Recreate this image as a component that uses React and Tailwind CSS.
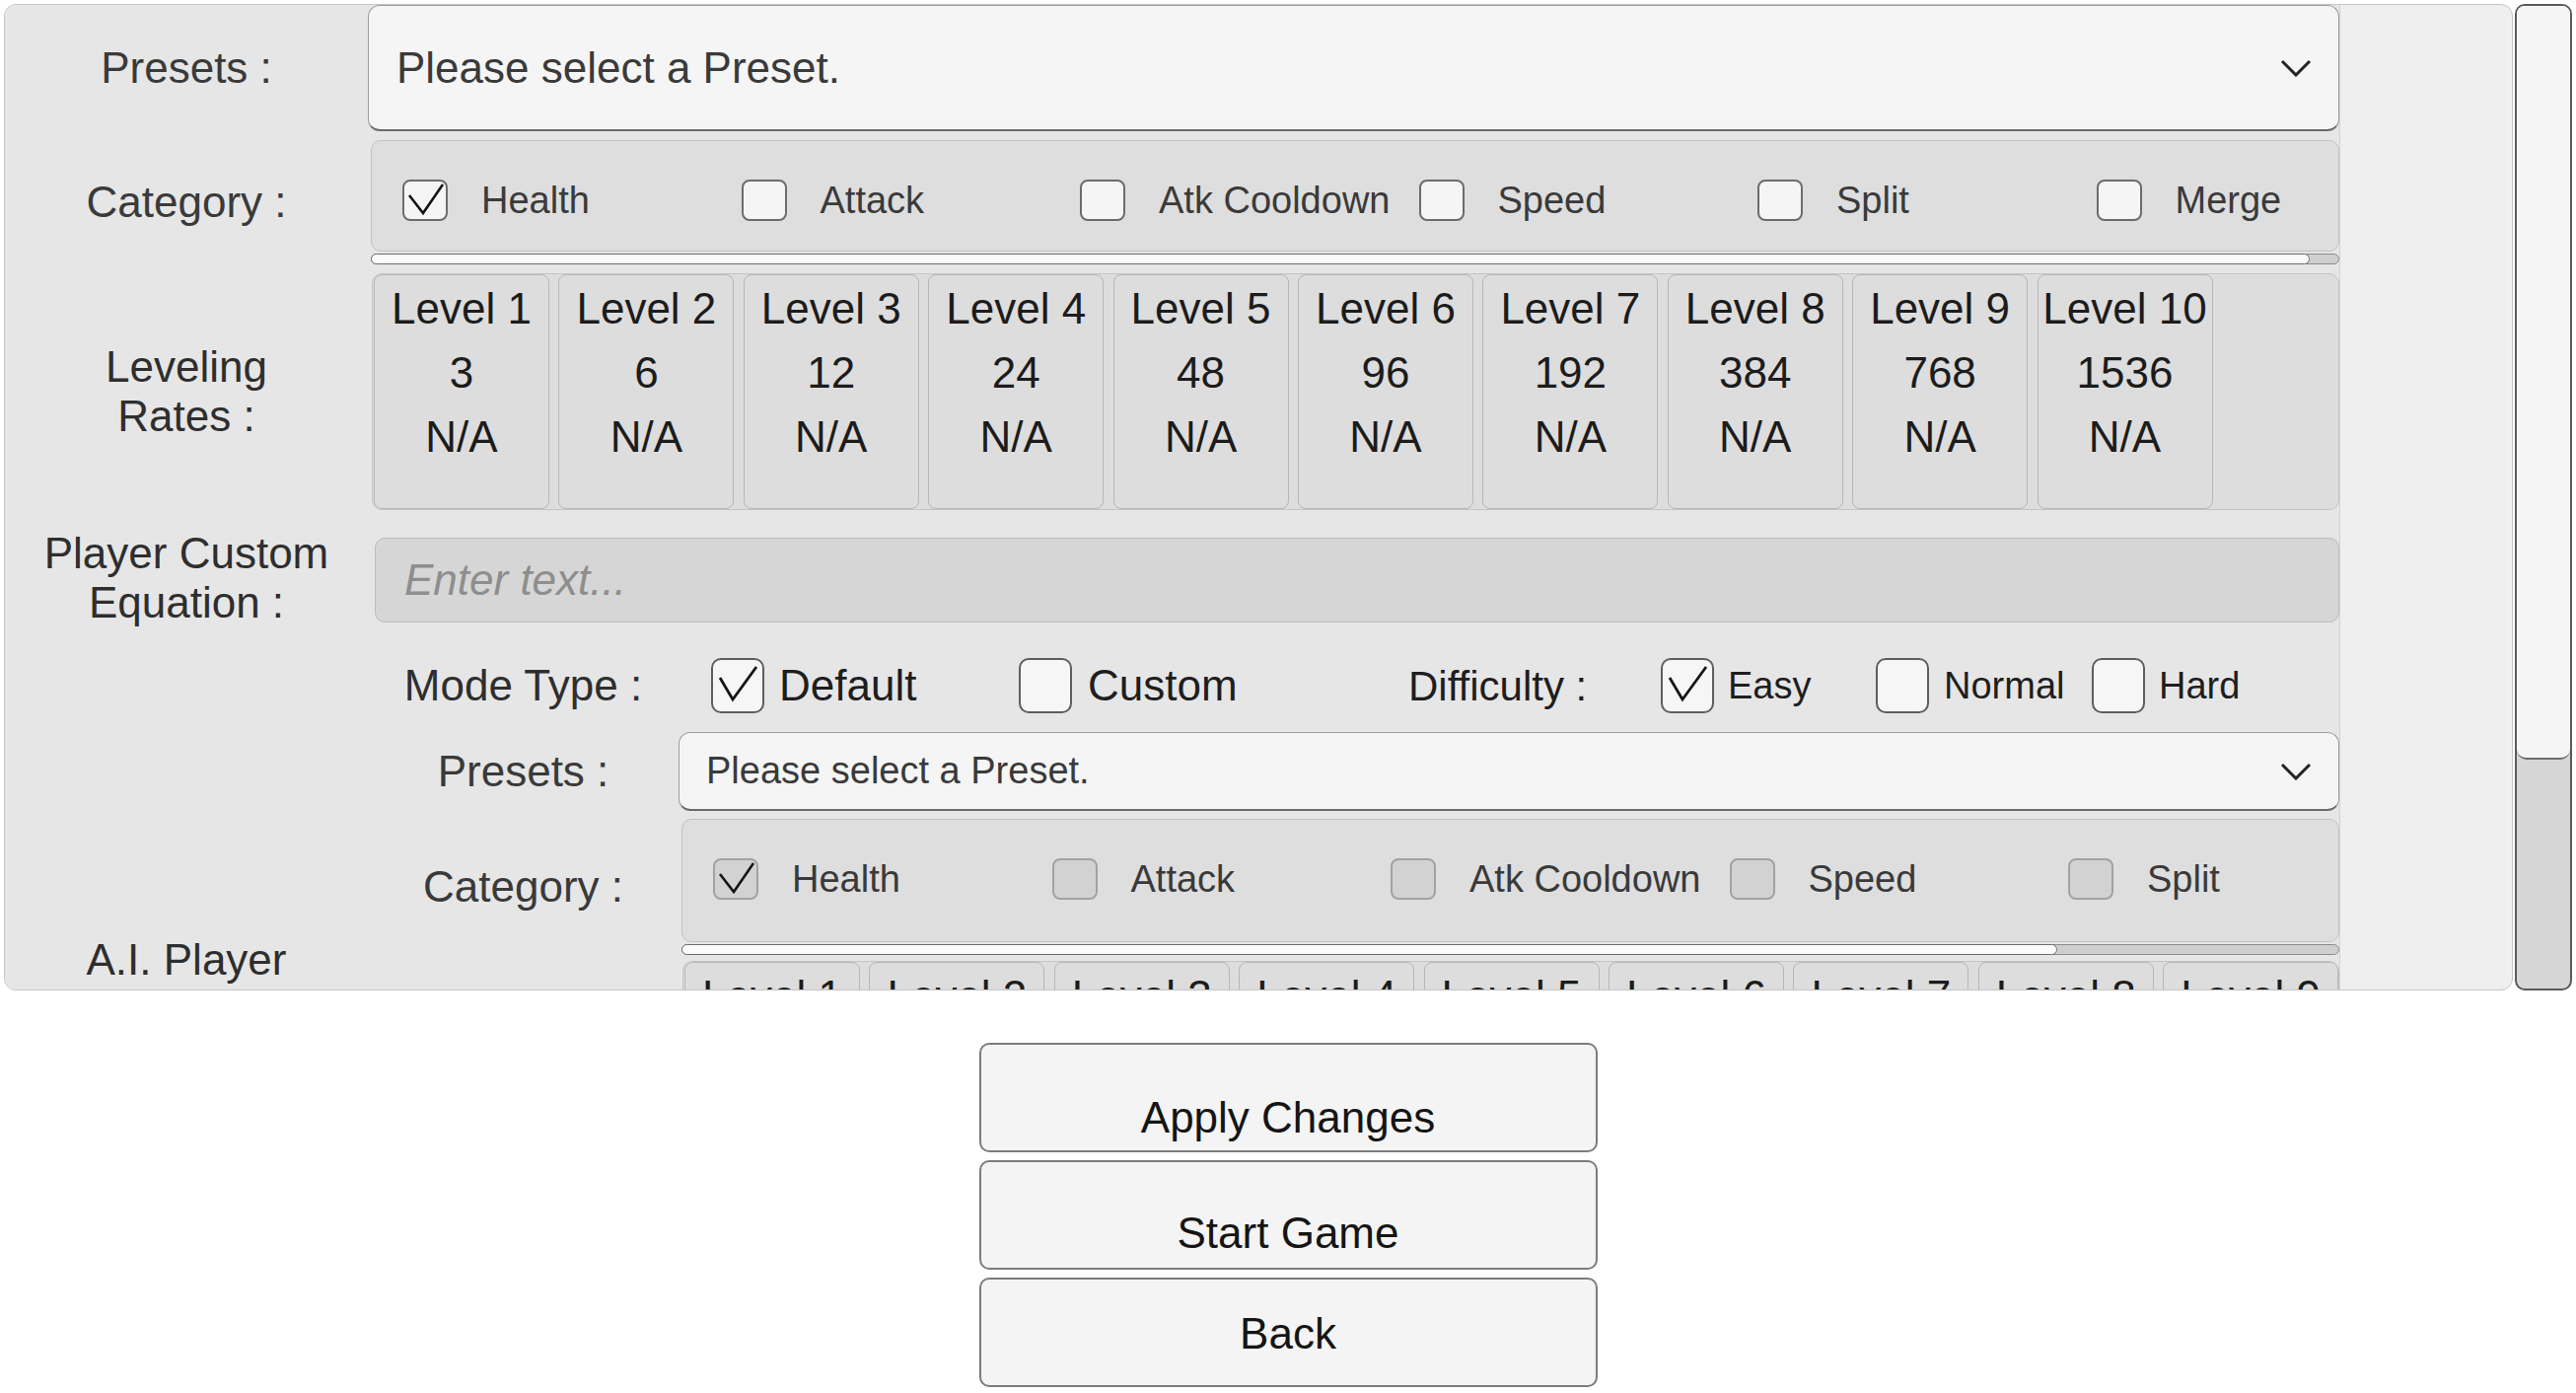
import React from "react";

const CATS = ["Health", "Attack", "Atk Cooldown", "Speed", "Split", "Merge"];
const LEVELS = [
  [1, 3], [2, 6], [3, 12], [4, 24], [5, 48],
  [6, 96], [7, 192], [8, 384], [9, 768], [10, 1536],
];

function SmallBox({ checked, disabled }) {
  return (
    <div
      className={`relative w-[46px] h-[42px] shrink-0 rounded-[8px] border-2 ${
        disabled ? "border-[#a2a2a2] bg-[#d2d2d2]" : "border-[#6c6c6c] bg-[#f5f5f5]"
      }`}
    >
      {checked && (
        <svg className="absolute inset-0 w-full h-full" viewBox="0 0 42 38">
          <polyline points="5,14 19,32 39,3" fill="none" stroke="#151515" strokeWidth="2.6" strokeLinejoin="miter" />
        </svg>
      )}
    </div>
  );
}

function BigBox({ checked }) {
  return (
    <div className="relative w-[54px] h-[56px] shrink-0 rounded-[10px] border-2 border-[#5e5e5e] bg-[#f6f6f6]">
      {checked && (
        <svg className="absolute inset-0 w-full h-full" viewBox="0 0 50 52">
          <polyline points="7,18 20,40 44,7" fill="none" stroke="#151515" strokeWidth="2.8" />
        </svg>
      )}
    </div>
  );
}

function Chevron() {
  return (
    <svg className="w-[32px] h-[18px] shrink-0" viewBox="0 0 32 18">
      <polyline points="2,2 16,16 30,2" fill="none" stroke="#222222" strokeWidth="3" />
    </svg>
  );
}

function Dropdown({ small }) {
  return (
    <div
      className={`flex-1 min-w-0 h-full flex items-center justify-between rounded-[12px] border border-[#9c9c9c] border-b-2 border-b-[#6a6a6a] bg-[#f5f5f5] pr-[27px] ${
        small ? "pl-[27px] text-[38px]" : "pl-[28px] text-[44px]"
      } text-[#3a3a3a]`}
    >
      <span className="whitespace-nowrap">Please select a Preset.</span>
      <Chevron />
    </div>
  );
}

function CategoryBlock({ disabled, boxH, thumbW }) {
  return (
    <div className="flex-1 min-w-0 flex flex-col">
      <div
        className={`flex items-start pt-[39px] pl-[31px] rounded-[10px] border border-[#c2c2c2] bg-[#dedede] overflow-hidden ${boxH}`}
      >
        {CATS.map((c, i) => (
          <div key={c} className="w-[343.5px] shrink-0 flex items-center">
            <SmallBox checked={i === 0} disabled={disabled} />
            <span className="ml-[34px] text-[38px] leading-none text-[#3a3a3a] whitespace-nowrap">{c}</span>
          </div>
        ))}
      </div>
      <div className="relative mt-[2px] h-[11px] rounded-full border border-[#8c8c8c] bg-[#cfcfcf]">
        <div className={`absolute left-[-1px] top-[-1px] bottom-[-1px] rounded-full border border-[#6c6c6c] bg-[#fbfbfb] ${thumbW}`} />
      </div>
    </div>
  );
}

function LevelsBlock() {
  return (
    <div className="flex-1 min-w-0 flex gap-[9.4px] h-[240px] pl-[1px] rounded-[10px] border border-[#c4c4c4] bg-[#dddddd] overflow-hidden">
      {LEVELS.map(([l, v]) => (
        <div
          key={l}
          className="w-[178px] shrink-0 h-full rounded-[8px] border-[1.5px] border-[#b6b6b6] bg-[#dddddd] flex flex-col items-center pt-[1px] text-[44px] leading-[65px] text-[#1c1c1c]"
        >
          <span className="whitespace-nowrap">Level {l}</span>
          <span>{v}</span>
          <span>N/A</span>
        </div>
      ))}
    </div>
  );
}

function InputBox() {
  return (
    <div className="flex-1 min-w-0 h-[86px] rounded-[10px] border border-[#bcbcbc] bg-[#d6d6d6] flex items-center pl-[29px]">
      <span className="italic text-[44px] text-[#8e8e8e]">Enter text...</span>
    </div>
  );
}

function Label({ children, w = "w-[368px]" }) {
  return (
    <div className={`${w} shrink-0 flex items-center justify-center text-center text-[44px] leading-[50px] text-[#2e2e2e] whitespace-nowrap`}>
      {children}
    </div>
  );
}

export default function App() {
  return (
    <div className="w-[2612px] h-[1412px] bg-white [font-family:'Liberation_Sans',Arial,sans-serif] overflow-hidden">
      <div className="flex pt-[4px] pl-[4px]">
        {/* scroll view */}
        <div className="w-[2544px] h-[1000px] shrink-0 rounded-[12px] border border-[#c6c6c6] bg-[#efefef] overflow-hidden">
          <div className="w-[2368px] h-full bg-[#e6e6e6] border-r border-[#d2d2d2] flex flex-col">
            {/* Presets */}
            <div className="flex h-[128px] shrink-0">
              <Label>
                <span className="text-[#3a3a3a]">Presets :</span>
              </Label>
              <Dropdown />
            </div>

            {/* Category */}
            <div className="flex mt-[9px] shrink-0">
              <Label>
                <span className="text-[#3a3a3a]">Category :</span>
              </Label>
              <div className="flex-1 min-w-0 flex pl-[3px]">
                <CategoryBlock boxH="h-[113px]" thumbW="w-[1966px]" />
              </div>
            </div>

            {/* Leveling Rates */}
            <div className="flex mt-[9px] shrink-0">
              <Label>
                <span>
                  Leveling
                  <br />
                  Rates :
                </span>
              </Label>
              <div className="flex-1 min-w-0 flex pl-[4px]">
                <LevelsBlock />
              </div>
            </div>

            {/* Player custom equation */}
            <div className="flex h-[86px] mt-[28px] shrink-0">
              <Label>
                <span className="-mt-[4px]">
                  Player Custom
                  <br />
                  Equation :
                </span>
              </Label>
              <div className="flex-1 min-w-0 flex pl-[7px]">
                <InputBox />
              </div>
            </div>

            {/* A.I. section */}
            <div className="flex mt-[34px] shrink-0">
              <div className="w-[368px] shrink-0 pt-[283px] text-center text-[44px] leading-[50px] text-[#2e2e2e]">
                A.I. Player
              </div>
              <div className="w-[1999px] min-w-0 flex flex-col">
                {/* Mode type row */}
                <div className="flex h-[60px] items-center shrink-0">
                  <Label w="w-[315px]">Mode Type :</Label>
                  <div className="flex items-center pl-[33px]">
                    <div className="w-[312px] flex items-center">
                      <BigBox checked />
                      <span className="ml-[15px] text-[44px] text-[#1e1e1e]">Default</span>
                    </div>
                    <div className="w-[395px] flex items-center">
                      <BigBox />
                      <span className="ml-[16px] text-[44px] text-[#1e1e1e]">Custom</span>
                    </div>
                    <div className="w-[256px] text-[42px] text-[#1e1e1e] whitespace-nowrap">Difficulty :</div>
                    <div className="w-[218px] flex items-center">
                      <BigBox checked />
                      <span className="ml-[14px] text-[38px] text-[#1e1e1e]">Easy</span>
                    </div>
                    <div className="w-[219px] flex items-center">
                      <BigBox />
                      <span className="ml-[15px] text-[38px] text-[#1e1e1e]">Normal</span>
                    </div>
                    <div className="flex items-center">
                      <BigBox />
                      <span className="ml-[14px] text-[38px] text-[#1e1e1e]">Hard</span>
                    </div>
                  </div>
                </div>

                {/* Presets 2 */}
                <div className="flex h-[80px] mt-[17px] shrink-0">
                  <Label w="w-[315px]">
                    <span className="text-[#3a3a3a]">Presets :</span>
                  </Label>
                  <Dropdown small />
                </div>

                {/* Category 2 */}
                <div className="flex mt-[8px] shrink-0">
                  <Label w="w-[315px]">
                    <span className="text-[#3a3a3a]">Category :</span>
                  </Label>
                  <div className="flex-1 min-w-0 flex pl-[3px]">
                    <CategoryBlock disabled boxH="h-[125px]" thumbW="w-[1395px]" />
                  </div>
                </div>

                {/* Levels 2 */}
                <div className="flex mt-[6px] shrink-0">
                  <Label w="w-[315px]">
                    <span>
                      Leveling
                      <br />
                      Rates :
                    </span>
                  </Label>
                  <div className="flex-1 min-w-0 flex pl-[4px]">
                    <LevelsBlock />
                  </div>
                </div>

                {/* Input 2 */}
                <div className="flex h-[86px] mt-[28px] shrink-0">
                  <Label w="w-[315px]">
                    <span>
                      Custom
                      <br />
                      Equation :
                    </span>
                  </Label>
                  <div className="flex-1 min-w-0 flex pl-[7px]">
                    <InputBox />
                  </div>
                </div>
              </div>
            </div>
          </div>
        </div>

        {/* vertical scrollbar */}
        <div className="ml-[2px] w-[58px] h-[1000px] shrink-0 rounded-[10px] border-2 border-[#5a5a5a] bg-[#d6d6d6] overflow-hidden flex flex-col">
          <div className="h-[764px] shrink-0 bg-[#f5f5f5] border-b-2 border-[#6a6a6a] rounded-b-[10px]" />
        </div>
      </div>

      {/* buttons */}
      <div className="mt-[53px] flex flex-col items-center gap-[8px]">
        <button className="w-[627px] h-[111px] rounded-[10px] border-2 border-[#7c7c7c] bg-[#f4f4f4] flex items-center justify-center pt-[40px] text-[44px] text-[#151515]">
          Apply Changes
        </button>
        <button className="w-[627px] h-[111px] rounded-[10px] border-2 border-[#7c7c7c] bg-[#f4f4f4] flex items-center justify-center pt-[36px] text-[44px] text-[#151515]">
          Start Game
        </button>
        <button className="w-[627px] h-[111px] rounded-[10px] border-2 border-[#7c7c7c] bg-[#f4f4f4] flex items-center justify-center pt-[2px] text-[44px] text-[#151515]">
          Back
        </button>
      </div>
    </div>
  );
}
